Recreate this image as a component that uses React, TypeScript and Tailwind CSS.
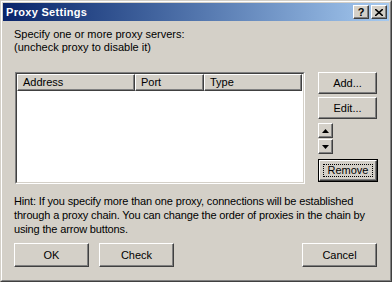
import React from "react"

const raised =
	"border border-t-white border-l-white border-r-[#404040] border-b-[#404040] shadow-[inset_-1px_-1px_#808080,inset_1px_1px_#d4d0c8] bg-[#d4d0c8]"

function Button({ label, className = "" }: { label: string; className?: string }) {
	return (
		<div className={`${raised} flex items-center justify-center ${className}`}>
			{label}
		</div>
	)
}

function ArrowButton({ up }: { up?: boolean }) {
	return (
		<div className={`${raised} w-[15px] h-[15px] flex items-center justify-center`}>
			<svg width="7" height="4" viewBox="0 0 7 4">
				{up
					? <polygon points="3.5,0 7,4 0,4" fill="#000" />
					: <polygon points="0,0 7,0 3.5,4" fill="#000" />}
			</svg>
		</div>
	)
}

function TitleButton({ children }: { children: React.ReactNode }) {
	return (
		<div className={`${raised} w-[16px] h-[14px] flex items-center justify-center text-black`}>
			{children}
		</div>
	)
}

function HeaderCell({ label, width }: { label: string; width: string }) {
	return (
		<div
			className={`${width} h-[17px] border border-t-white border-l-white border-r-[#404040] border-b-[#404040] shadow-[inset_-1px_-1px_#808080] pl-[5px] leading-[15px] bg-[#d4d0c8]`}
		>
			{label}
		</div>
	)
}

export default function App() {
	return (
		<div className="w-[392px] h-[282px] border border-t-[#d4d0c8] border-l-[#d4d0c8] border-r-[#404040] border-b-[#404040] bg-[#d4d0c8] font-['Liberation_Sans',Arial,sans-serif] text-[11px] text-black">
			<div className="h-full border border-t-white border-l-white border-r-[#808080] border-b-[#808080] p-px flex flex-col">
				{/* Title bar */}
				<div className="h-[18px] bg-linear-to-r from-[#0a246a] to-[#a6caf0] flex items-center pl-[3px] pr-[2px]">
					<span className="text-white font-bold text-[11px] tracking-[0.3px] flex-1">Proxy Settings</span>
					<TitleButton>
						<span className="font-bold text-[11px] leading-none">?</span>
					</TitleButton>
					<div className="w-[2px]" />
					<TitleButton>
						<svg width="8" height="7" viewBox="0 0 8 7">
							<path d="M0,0 L8,7 M8,0 L0,7" stroke="#000" strokeWidth="1.6" />
						</svg>
					</TitleButton>
				</div>

				{/* Body */}
				<div className="flex-1 pl-[11px] pr-[11px] flex flex-col">
					<div className="mt-[7px] leading-[13px]">
						<div>Specify one or more proxy servers:</div>
						<div>(uncheck proxy to disable it)</div>
					</div>

					<div className="mt-[18px] flex">
						<div className="ml-px w-[290px] h-[112px] border border-t-[#808080] border-l-[#808080] border-r-white border-b-white">
							<div className="h-full border border-t-[#404040] border-l-[#404040] border-r-[#d4d0c8] border-b-[#d4d0c8] bg-white">
								<div className="flex">
									<HeaderCell label="Address" width="w-[118px]" />
									<HeaderCell label="Port" width="w-[69px]" />
									<HeaderCell label="Type" width="w-[98px]" />
								</div>
							</div>
						</div>

						<div className="ml-[13px] flex flex-col">
							<Button label="Add..." className="w-[59px] h-[22px]" />
							<Button label="Edit..." className="w-[59px] h-[22px] mt-[3px]" />
							<div className="mt-[4px]">
								<ArrowButton up />
							</div>
							<div className="mt-px">
								<ArrowButton />
							</div>
							<div className="mt-[5px] w-[60px] h-[23px] border border-black">
								<div className={`${raised} w-full h-full p-[3px]`}>
									<div className="w-full h-full border border-dotted border-black flex items-center justify-center">
										Remove
									</div>
								</div>
							</div>
						</div>
					</div>

					<div className="mt-[10px] leading-[14px] tracking-[-0.15px]">
						Hint: If you specify more than one proxy, connections will be established
						<br />
						through a proxy chain. You can change the order of proxies in the chain by
						<br />
						using the arrow buttons.
					</div>

					<div className="mt-[7px] flex">
						<Button label="OK" className="w-[75px] h-[24px]" />
						<Button label="Check" className="w-[75px] h-[24px] ml-[10px]" />
						<div className="flex-1" />
						<Button label="Cancel" className="w-[75px] h-[24px] mr-[1px]" />
					</div>
				</div>
			</div>
		</div>
	)
}
